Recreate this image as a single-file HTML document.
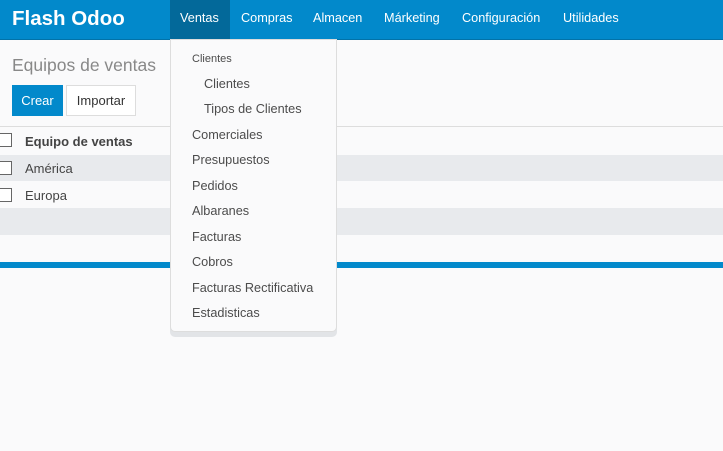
<!DOCTYPE html>
<html><head><meta charset="utf-8"><style>
*{margin:0;padding:0;box-sizing:border-box}
body{width:723px;height:451px;background:#fafafb;font-family:"Liberation Sans",sans-serif;position:relative;overflow:hidden;color:#4c4c4c}
.nav{position:absolute;left:0;top:0;width:723px;height:40px;background:#0289cb;border-bottom:1px solid #0272a8}
.brand{position:absolute;left:12px;top:7px;font-size:20.5px;font-weight:bold;color:#fff}
.nav a{position:absolute;top:0;height:39px;line-height:36px;font-size:12.7px;color:#fff;padding:0 10px}
.act{background:#03699a}
.t{position:absolute;left:12px;top:55px;font-size:17.5px;color:#888}
.b1{position:absolute;left:12px;top:85px;width:51px;height:31px;background:#0289cb;color:#fff;font-size:13px;text-align:center;line-height:31px}
.b2{position:absolute;left:66px;top:85px;width:70px;height:31px;border:1px solid #ddd;background:#fff;color:#333;font-size:13px;text-align:center;line-height:29px}
.row{position:absolute;left:0;width:723px;font-size:13px;color:#444}
.cb{position:absolute;left:-2px;width:14px;height:14px;border:1px solid #666;background:#fff}
.dd{position:absolute;left:170px;top:39px;width:167px;height:293px;background:#fafafb;border:1px solid #ddd;box-shadow:0 5px 0 #e2e4e7;border-radius:0 0 5px 5px}
.dd div{position:absolute;font-size:12.7px;color:#4c4c4c}
</style></head><body>
<div class="nav">
<div class="brand">Flash Odoo</div>
<a class="act" style="left:170px;width:60px">Ventas</a>
<a style="left:231px">Compras</a>
<a style="left:303px">Almacen</a>
<a style="left:374px">Márketing</a>
<a style="left:452px">Configuración</a>
<a style="left:553px">Utilidades</a>
</div>
<div class="t">Equipos de ventas</div>
<div class="b1">Crear</div>
<div class="b2">Importar</div>
<div class="row" style="top:126px;height:29px;border-top:1px solid #ddd;background:#fafafb"><span class="cb" style="top:6px"></span><b style="position:absolute;left:25px;top:7px">Equipo de ventas</b></div>
<div class="row" style="top:155px;height:26px;background:#e8eaed"><span class="cb" style="top:6px"></span><span style="position:absolute;left:25px;top:6px">América</span></div>
<div class="row" style="top:181px;height:27px;background:#fafafb"><span class="cb" style="top:7px"></span><span style="position:absolute;left:25px;top:7px">Europa</span></div>
<div class="row" style="top:208px;height:27px;background:#e8eaed"></div>
<div class="row" style="top:262px;height:6px;background:#0289cb"></div>
<div class="dd">
<div style="left:21px;top:13px;font-size:11px">Clientes</div>
<div style="left:33px;top:37px">Clientes</div>
<div style="left:33px;top:62px">Tipos de Clientes</div>
<div style="left:21px;top:88px">Comerciales</div>
<div style="left:21px;top:113px">Presupuestos</div>
<div style="left:21px;top:139px">Pedidos</div>
<div style="left:21px;top:164px">Albaranes</div>
<div style="left:21px;top:190px">Facturas</div>
<div style="left:21px;top:215px">Cobros</div>
<div style="left:21px;top:241px">Facturas Rectificativa</div>
<div style="left:21px;top:266px">Estadisticas</div>
</div>
</body></html>
